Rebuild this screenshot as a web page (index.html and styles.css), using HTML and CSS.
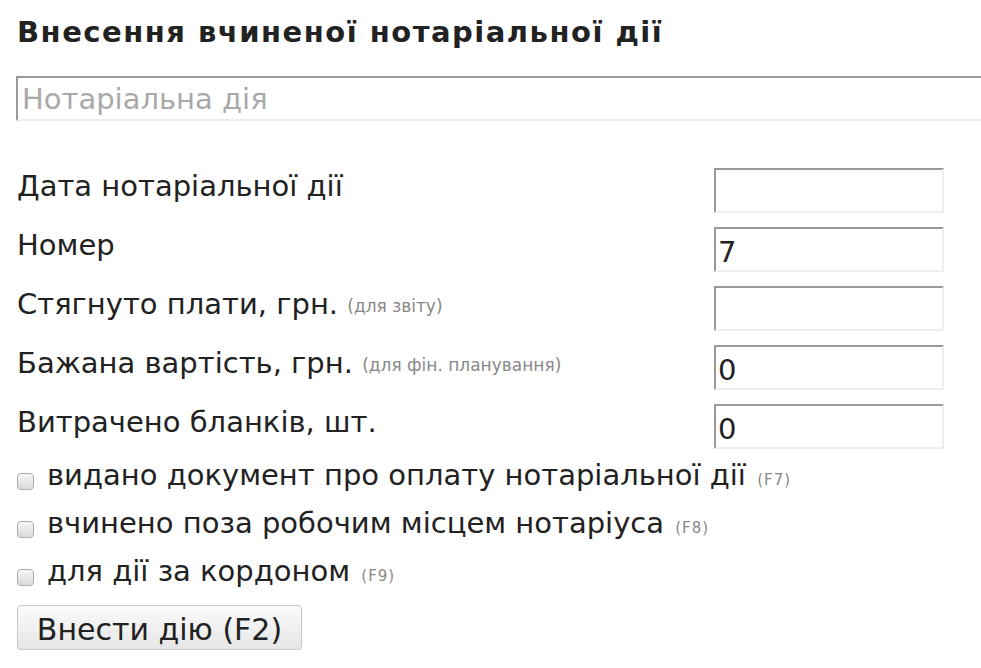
FILE: index.html
```html
<!DOCTYPE html>
<html lang="uk">
<head>
<meta charset="utf-8">
<title>Внесення вчиненої нотаріальної дії</title>
<link rel="stylesheet" href="styles.css">
</head>
<body>
<div class="page">
  <h1 class="title">Внесення вчиненої нотаріальної дії</h1>
  <input class="action-input" type="text" placeholder="Нотаріальна дія">
  <div class="fields">
    <div class="field-row">
      <label class="field-label">Дата нотаріальної дії</label>
      <input class="field-input" type="text" value="">
    </div>
    <div class="field-row">
      <label class="field-label">Номер</label>
      <input class="field-input" type="text" value="7">
    </div>
    <div class="field-row">
      <label class="field-label">Стягнуто плати, грн. <span class="hint">(для звіту)</span></label>
      <input class="field-input" type="text" value="">
    </div>
    <div class="field-row">
      <label class="field-label">Бажана вартість, грн. <span class="hint">(для фін. планування)</span></label>
      <input class="field-input" type="text" value="0">
    </div>
    <div class="field-row">
      <label class="field-label">Витрачено бланків, шт.</label>
      <input class="field-input" type="text" value="0">
    </div>
  </div>
  <div class="checks">
    <label class="check-row"><input type="checkbox" class="check"><span class="check-text">видано документ про оплату нотаріальної дії <span class="key">(F7)</span></span></label>
    <label class="check-row"><input type="checkbox" class="check"><span class="check-text">вчинено поза робочим місцем нотаріуса <span class="key">(F8)</span></span></label>
    <label class="check-row"><input type="checkbox" class="check"><span class="check-text">для дії за кордоном <span class="key">(F9)</span></span></label>
  </div>
  <button class="submit" type="button">Внести дію (F2)</button>
</div>
</body>
</html>
```
FILE: styles.css
```css
html, body {
  margin: 0;
  padding: 0;
  background: #ffffff;
  overflow: hidden;
}
body {
  font-family: "DejaVu Sans", Verdana, sans-serif;
  color: #222222;
}
.page {
  padding: 14px 0 0 17px;
}
.title {
  margin: 0;
  font-size: 29px;
  font-weight: bold;
  letter-spacing: 1.5px;
  line-height: 36px;
  color: #222222;
}
.action-input {
  display: block;
  box-sizing: border-box;
  margin: 26px 0 0 -1px;
  width: 1000px;
  height: 45px;
  padding: 0 4px;
  border-style: solid;
  border-width: 2px;
  border-color: #999999 #eeeeee #eeeeee #999999;
  font-family: inherit;
  font-size: 29px;
  color: #222222;
  outline: none;
}
.action-input::placeholder {
  color: #a9a9a9;
}
.fields {
  margin-top: 47px;
  display: flex;
  flex-direction: column;
  gap: 14px;
}
.field-row {
  display: grid;
  grid-template-columns: 697px 230px;
  align-items: start;
}
.field-label {
  font-size: 29px;
  line-height: 36px;
  white-space: nowrap;
}
.hint {
  font-size: 17px;
  color: #888888;
  vertical-align: 2px;
}
.field-input {
  box-sizing: border-box;
  width: 230px;
  height: 45px;
  padding: 5px 2px 0 2px;
  border-style: solid;
  border-width: 2px;
  border-color: #999999 #eeeeee #eeeeee #999999;
  font-family: inherit;
  font-size: 29px;
  color: #222222;
  outline: none;
}
.checks {
  margin-top: 8px;
  display: flex;
  flex-direction: column;
  gap: 8px;
}
.check-row {
  display: flex;
  align-items: center;
  height: 40px;
  font-size: 29px;
  line-height: 40px;
  white-space: nowrap;
}
.check {
  appearance: none;
  -webkit-appearance: none;
  box-sizing: border-box;
  width: 17px;
  height: 17px;
  margin: 9px 13px 0 0;
  border: 1px solid #adadad;
  border-radius: 4px;
  background: linear-gradient(#f6f6f6, #dadada);
  flex: none;
}
.key {
  font-size: 15px;
  letter-spacing: 1px;
  color: #888888;
  margin-left: 2px;
}
.submit {
  display: block;
  margin-top: 12px;
  box-sizing: border-box;
  width: 285px;
  height: 45px;
  padding: 4px 0 0 0;
  border: 1px solid #c8c8c8;
  border-radius: 4px;
  background: linear-gradient(#fbfbfb, #e6e6e6);
  box-shadow: 0 1px 1px rgba(0,0,0,0.15);
  font-family: inherit;
  font-size: 30px;
  color: #222222;
}
```
